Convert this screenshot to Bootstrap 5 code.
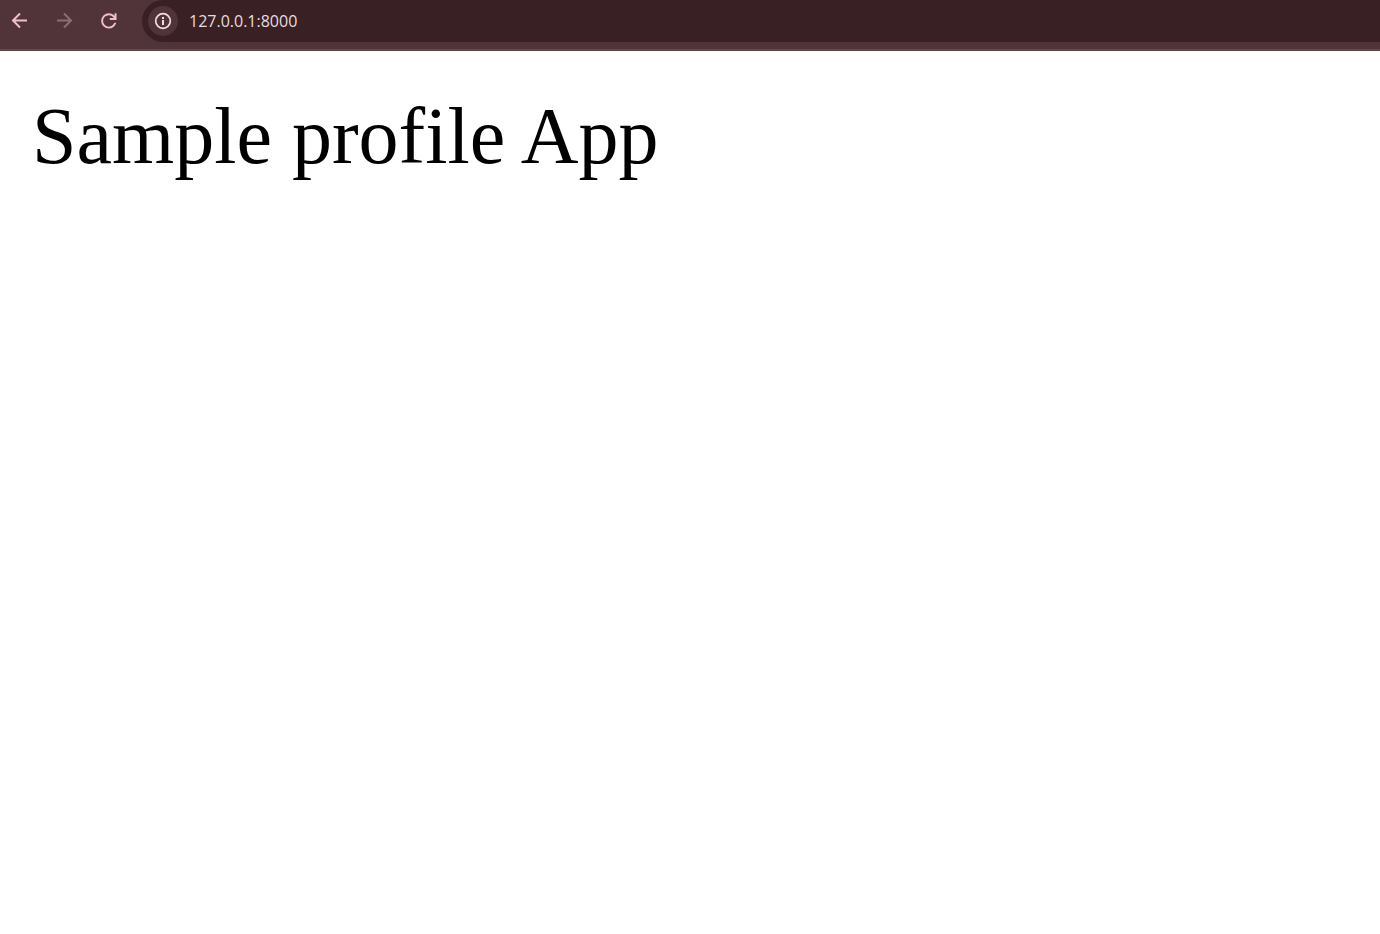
<!DOCTYPE html>
<html lang="en">
<head>
<meta charset="utf-8">
<meta name="viewport" content="width=device-width, initial-scale=1">
<title>Sample profile App</title>
<link href="https://cdn.jsdelivr.net/npm/bootstrap@5.3.0/dist/css/bootstrap.min.css" rel="stylesheet">
<style>
  body { background: #fff; }
  .toolbar { background: #513439; border-bottom: 2px solid #5a474a; padding-bottom: 7px; }
  .tool-btn, .tool-btn:hover, .tool-btn:active { width: 45px; height: 42px; color: #f0bfc8; }
  .tool-btn:disabled { color: #8d6d73; opacity: 1; }
  .address { background: #382024; height: 42px; border-radius: 21px 0 0 21px; margin-left: 7px; padding-left: 6px; }
  .site-info, .site-info:hover { width: 30px; height: 30px; background: #513439; color: #f3dde0; }
  .address-input { color: #e9dcde; font: 16px/24px "Open Sans", sans-serif; outline: 0; margin-left: 11px; min-width: 0; }
  .page-title { font: 400 80px/90px "Liberation Serif", serif; color: #000; font-variant-ligatures: no-common-ligatures; padding: 40px 32px; }
</style>
</head>
<body>
<header class="toolbar d-flex align-items-center">
  <nav class="d-flex flex-shrink-0" aria-label="Browser navigation">
    <button type="button" class="tool-btn btn border-0 rounded-0 p-0 d-flex align-items-center ps-2" aria-label="Back">
      <svg width="24" height="24" viewBox="0 0 24 24" fill="none" stroke="currentColor" stroke-width="2"><path d="M19 11.500H6M12 4.500l-7 7 7 7"/></svg>
    </button>
    <button type="button" class="tool-btn btn border-0 rounded-0 p-0 d-flex align-items-center ps-2" aria-label="Forward" disabled>
      <svg width="24" height="24" viewBox="0 0 24 24" fill="none" stroke="currentColor" stroke-width="2"><path d="M4 11.500h13M11 4.500l7 7-7 7"/></svg>
    </button>
    <button type="button" class="tool-btn btn border-0 rounded-0 p-0 d-flex align-items-center ps-2" aria-label="Reload">
      <svg width="24" height="24" viewBox="0.700 -0.400 25 25" fill="currentColor"><path d="M12 20q-3.350 0-5.675-2.325T4 12t2.325-5.675T12 4q1.725 0 3.300.713T18 6.750V4h2v7h-7V9h4.200q-.8-1.400-2.188-2.200T12 6Q9.500 6 7.750 7.750T6 12t1.750 4.250T12 18q1.925 0 3.475-1.100T17.650 14h2.100q-.7 2.650-2.850 4.325T12 20"/></svg>
    </button>
  </nav>
  <div class="address d-flex align-items-center flex-grow-1">
    <button type="button" class="site-info btn border-0 rounded-circle p-0 d-flex align-items-center justify-content-center flex-shrink-0" aria-label="View site information">
      <svg width="18" height="18" viewBox="0 0 18 18" fill="none" stroke="currentColor" stroke-width="2"><circle cx="9" cy="9" r="7.300" stroke-width="1.700"/><path d="M9 8v5M9 5v2"/></svg>
    </button>
    <input class="address-input bg-transparent border-0 p-0 flex-grow-1" type="text" value="127.0.0.1:8000" aria-label="Address" spellcheck="false">
  </div>
</header>
<main>
  <h1 class="page-title m-0">Sample profile App</h1>
</main>
<script src="https://cdn.jsdelivr.net/npm/bootstrap@5.3.0/dist/js/bootstrap.bundle.min.js"></script>
</body>
</html>
